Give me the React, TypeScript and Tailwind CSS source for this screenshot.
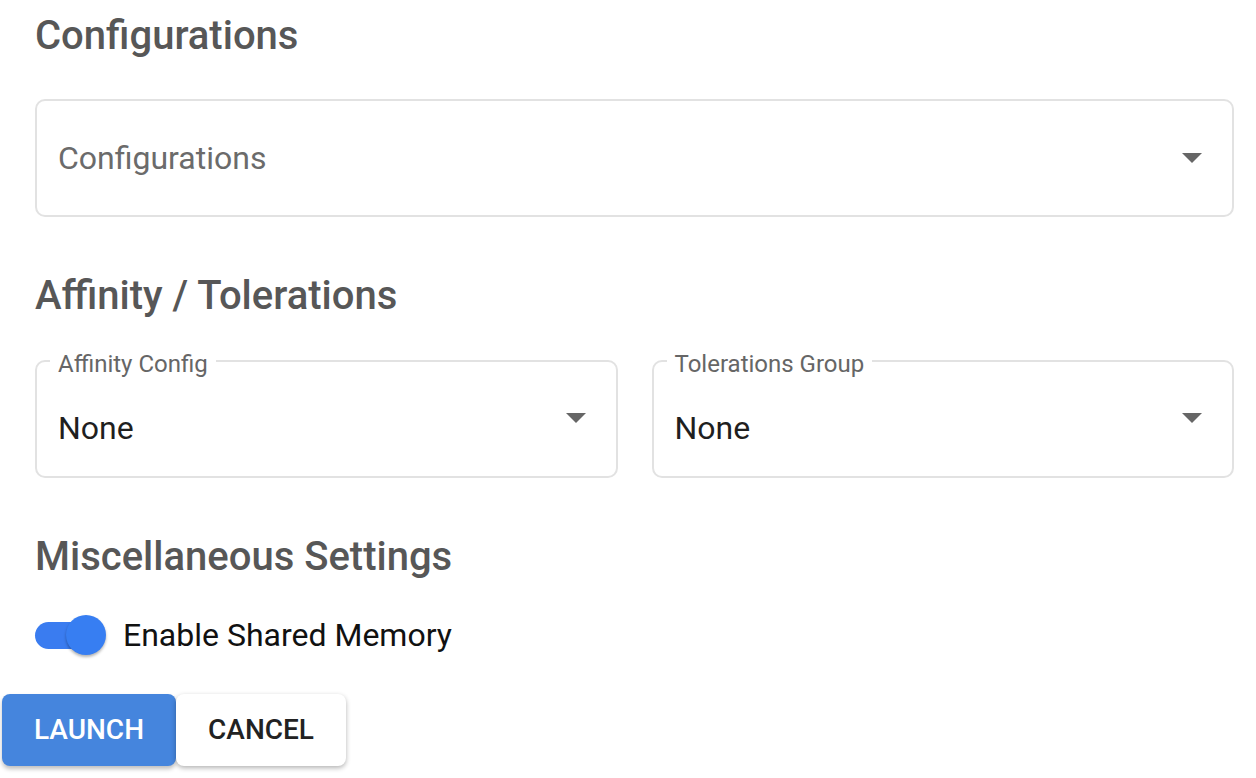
import React from "react";

function Arrow() {
  return (
    <svg width="20" height="10" viewBox="0 0 20 10" className="shrink-0">
      <path d="M0 0 L20 0 L10 10 Z" fill="#666666" />
    </svg>
  );
}

function Heading({ children }: { children: React.ReactNode }) {
  return (
    <h2 className="text-[40px] leading-[48px] font-medium text-[#575757]">{children}</h2>
  );
}

function LabeledSelect({ label, value }: { label: string; value: string }) {
  return (
    <div className="relative flex-1 h-[118px] rounded-[10px] border-2 border-[#e2e2e2] flex items-center justify-between pl-[21px] pr-[30px] pt-[18px]">
      <span className="absolute left-[13px] -top-[12px] bg-white px-[8px] text-[24px] leading-[28px] text-[#666666]">
        {label}
      </span>
      <span className="text-[32px] text-[#1f1f1f]">{value}</span>
      <div className="-mt-[20px]">
        <Arrow />
      </div>
    </div>
  );
}

export default function App() {
  return (
    <div
      className="w-[1256px] h-[778px] bg-white overflow-hidden"
      style={{ fontFamily: "Roboto, 'Noto Sans', sans-serif" }}
    >
      <div className="pl-[35px] pr-[22px] pt-[12px]">
        <Heading>Configurations</Heading>
        <div className="mt-[39px] h-[118px] rounded-[10px] border-2 border-[#e2e2e2] flex items-center justify-between pl-[21px] pr-[30px]">
          <span className="text-[32px] text-[#6b6b6b]">Configurations</span>
          <Arrow />
        </div>
        <div className="mt-[55px]">
          <Heading>Affinity / Tolerations</Heading>
        </div>
        <div className="mt-[40px] flex gap-[34px]">
          <LabeledSelect label="Affinity Config" value="None" />
          <LabeledSelect label="Tolerations Group" value="None" />
        </div>
        <div className="mt-[55px]">
          <Heading>Miscellaneous Settings</Heading>
        </div>
        <div className="mt-[32px] flex items-center h-[44px]">
          <div className="relative w-[72px] h-[44px] flex items-center">
            <div className="w-[66px] h-[27px] rounded-full bg-[#3a7cf0]" />
            <div className="absolute left-[31px] top-[2px] w-[40px] h-[40px] rounded-full bg-[#377ef2] shadow-[0_2px_3px_rgba(0,0,0,0.3)]" />
          </div>
          <span className="ml-[16px] text-[32px] text-[#111111]">Enable Shared Memory</span>
        </div>
      </div>
      <div className="mt-[37px] ml-[2px] flex">
        <button className="w-[174px] h-[72px] rounded-[8px] bg-[#4585dd] text-white text-[28px] font-medium uppercase shadow-[0_3px_4px_rgba(0,0,0,0.25)]">
          Launch
        </button>
        <button className="w-[170px] h-[72px] rounded-[8px] bg-white text-[#222222] text-[28px] font-medium uppercase shadow-[0_2px_5px_rgba(0,0,0,0.3)]">
          Cancel
        </button>
      </div>
    </div>
  );
}
